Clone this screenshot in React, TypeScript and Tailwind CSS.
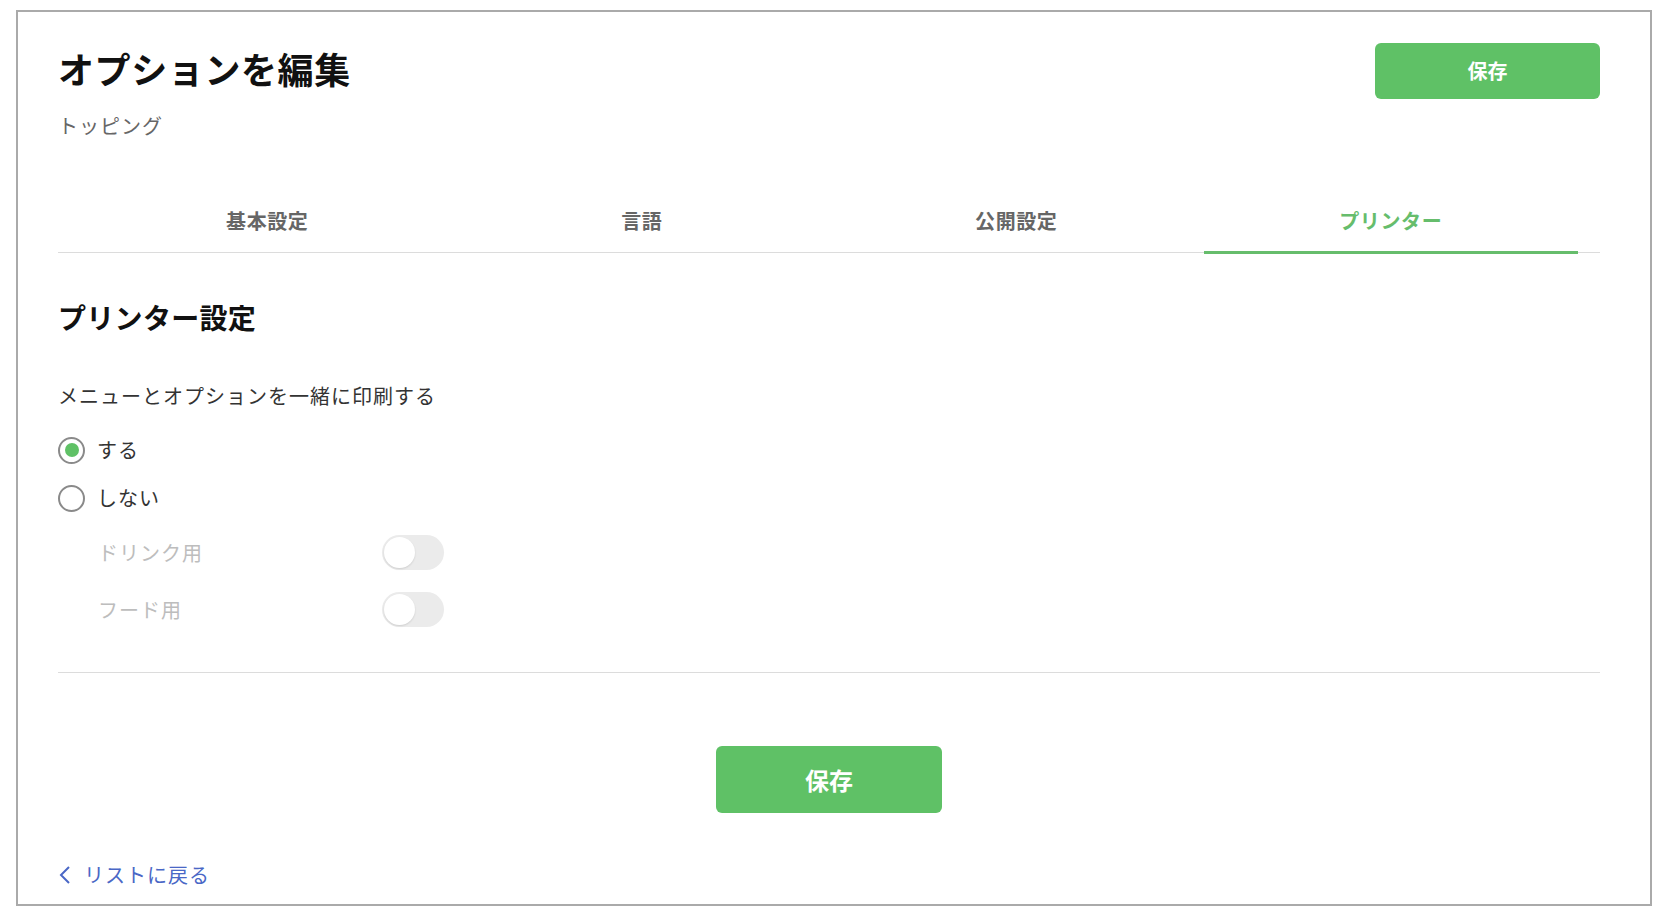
import { useState } from "react";

const tabs = ["基本設定", "言語", "公開設定", "プリンター"];

function Toggle({ on }: { on: boolean }) {
  return (
    <div
      className={`relative h-[35px] w-[62px] rounded-full ${on ? "bg-[#5fc166]" : "bg-[#ebebeb]"}`}
    >
      <span
        className={`absolute top-[2px] h-[31px] w-[31px] rounded-full bg-white shadow-[0_1px_2px_rgba(0,0,0,0.12)] ${on ? "left-[29px]" : "left-[2px]"}`}
      />
    </div>
  );
}

function Radio({ checked, label, onClick }: { checked: boolean; label: string; onClick: () => void }) {
  return (
    <button type="button" onClick={onClick} className="flex h-[28px] items-center gap-[12px]">
      <span className="flex h-[27px] w-[27px] items-center justify-center rounded-full border-2 border-[#8a8a8a] bg-white">
        {checked && <span className="h-[14px] w-[14px] rounded-full bg-[#5fc166]" />}
      </span>
      <span className="text-[20px] leading-[28px] tracking-[1px] text-[#333]">{label}</span>
    </button>
  );
}

export default function App() {
  const [active, setActive] = useState(3);
  const [print, setPrint] = useState(true);

  return (
    <div
      className="min-h-[922px] bg-white pl-4 pt-[10px]"
      style={{ fontFamily: '"Noto Sans CJK JP", "Noto Sans", sans-serif' }}
    >
      <div className="flex h-[896px] w-[1636px] flex-col border-2 border-[#aaaaaa] pl-10 pr-[50px]">
        <div className="flex items-start justify-between pt-[31px]">
          <div>
            <h1 className="mt-[3px] text-[36px] font-bold leading-[44px] tracking-[0.6px] text-[#111]">オプションを編集</h1>
            <p className="mt-[22px] text-[20px] leading-[28px] tracking-[1px] text-[#666]">トッピング</p>
          </div>
          <button
            type="button"
            className="h-[56px] w-[225px] rounded-[6px] bg-[#5fc166] text-[20px] font-bold text-white"
          >
            保存
          </button>
        </div>

        <div className="mt-[46px] flex border-b border-[#dcdcdc] px-[22px]">
          {tabs.map((t, i) => (
            <button
              key={t}
              type="button"
              onClick={() => setActive(i)}
              className={`relative flex h-[66px] flex-1 items-center justify-center pt-[3px] text-[20px] font-bold tracking-[0.6px] ${i === active ? "text-[#66bd6c]" : "text-[#666]"}`}
            >
              {t}
              {i === active && <span className="absolute bottom-[-2px] left-0 right-0 h-[3px] bg-[#66bd6c]" />}
            </button>
          ))}
        </div>

        <h2 className="mt-[46px] text-[28px] font-bold leading-[36px] tracking-[0.3px] text-[#111]">プリンター設定</h2>
        <p className="mt-[47px] text-[20px] leading-[28px] tracking-[1px] text-[#333]">メニューとオプションを一緒に印刷する</p>

        <div className="mt-[26px] flex flex-col items-start gap-5">
          <Radio checked={print} label="する" onClick={() => setPrint(true)} />
          <Radio checked={!print} label="しない" onClick={() => setPrint(false)} />
        </div>

        <div className="mt-[23px] flex flex-col gap-[22px] pl-10">
          {["ドリンク用", "フード用"].map((l) => (
            <div key={l} className="flex items-center">
              <span className="w-[284px] text-[20px] leading-[28px] tracking-[1px] text-[#bdbdbd]">{l}</span>
              <Toggle on={false} />
            </div>
          ))}
        </div>

        <div className="mt-[45px] border-t border-[#dcdcdc]" />

        <div className="mt-[73px] flex justify-center">
          <button
            type="button"
            className="h-[67px] w-[226px] rounded-[6px] bg-[#5fc166] text-[24px] font-bold text-white"
          >
            保存
          </button>
        </div>

        <a href="#" className="mt-[48px] flex items-center gap-[12px] text-[20px] leading-[28px] tracking-[1px] text-[#4a67c6]">
          <svg width="14" height="20" viewBox="0 0 14 20" fill="none" stroke="currentColor" strokeWidth="2">
            <path d="M11 2 L3 10 L11 18" />
          </svg>
          <span>リストに戻る</span>
        </a>
      </div>
    </div>
  );
}
